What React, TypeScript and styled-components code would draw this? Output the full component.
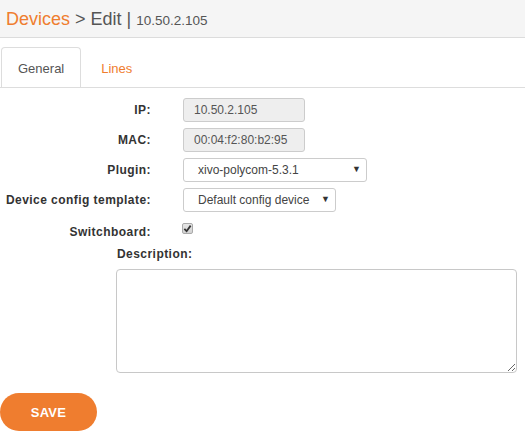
import React, { useState } from 'react';
import styled, { createGlobalStyle } from 'styled-components';

const GlobalStyle = createGlobalStyle`
  html, body {
    margin: 0;
    padding: 0;
    background: #fff;
    font-family: "Liberation Sans", Arial, sans-serif;
  }
`;

const ORANGE = '#ef7d2f';

const Page = styled.div`
  width: 525px;
  height: 433px;
  overflow: hidden;
`;

const Header = styled.div`
  height: 38px;
  background: #f5f5f5;
  border-bottom: 1px solid #dcdcdc;
  display: flex;
  align-items: center;
  padding-left: 6px;
  color: #555;
  font-size: 18px;
  padding-top: 2px;
  box-sizing: border-box;
  white-space: pre;
`;

const Crumb = styled.span`
  color: ${ORANGE};
`;

const SubTitle = styled.span`
  font-size: 13.5px;
  color: #555;
  padding-top: 2px;
`;

const TabBar = styled.div`
  display: flex;
  margin-top: 9px;
  padding-left: 1px;
  border-bottom: 1px solid #ddd;
  height: 40px;
`;

const Tab = styled.div<{ $active?: boolean }>`
  padding: 1px 16px 0;
  display: flex;
  align-items: center;
  font-size: 13px;
  color: ${p => (p.$active ? '#555' : ORANGE)};
  border: 1px solid ${p => (p.$active ? '#ddd' : 'transparent')};
  border-bottom: none;
  border-radius: 4px 4px 0 0;
  background: #fff;
  margin-bottom: -1px;
  height: 40px;
  box-sizing: border-box;
  & + & {
    margin-left: 3px;
  }
`;

const Form = styled.div`
  display: grid;
  grid-template-columns: 151px auto;
  column-gap: 32px;
  row-gap: 6px;
  margin-top: 10px;
  align-items: center;
`;

const Label = styled.label`
  text-align: right;
  font-weight: bold;
  font-size: 12px;
  line-height: 14px;
  color: #333;
  white-space: nowrap;
  letter-spacing: 0.45px;
`;

const TextInput = styled.input`
  width: 122px;
  height: 24px;
  box-sizing: border-box;
  border: 1px solid #ccc;
  border-radius: 3px;
  background: #eee;
  color: #555;
  font-family: inherit;
  font-size: 12px;
  padding: 0 10px;
  justify-self: start;
`;

const SelectBox = styled.div<{ $w: number }>`
  width: ${p => p.$w}px;
  height: 24px;
  box-sizing: border-box;
  border: 1px solid #ccc;
  border-radius: 3px;
  background: #fff;
  color: #444;
  font-size: 12px;
  display: flex;
  align-items: center;
  justify-content: space-between;
  padding: 0 5px 0 14px;
  justify-self: start;
`;

const Arrow = styled.span`
  font-size: 9px;
  color: #333;
  margin-top: -3px;
`;

const CheckLabel = styled(Label)`
  align-self: start;
  margin-top: 7px;
`;

const Check = styled.div`
  align-self: start;
  width: 11px;
  height: 11px;
  box-sizing: border-box;
  border: 1px solid #aaa;
  border-radius: 2px;
  background: linear-gradient(#e6e6e6, #d2d2d2);
  display: flex;
  align-items: center;
  justify-content: center;
  margin-top: 5px;
  margin-left: -1px;
`;

const DescBlock = styled.div`
  margin-left: 116px;
  margin-top: 8px;
`;

const DescLabel = styled.div`
  font-weight: bold;
  font-size: 12px;
  line-height: 14px;
  color: #333;
  letter-spacing: 0.45px;
  margin-left: 1px;
  margin-bottom: 8px;
`;

const TextArea = styled.textarea`
  display: block;
  width: 401px;
  height: 104px;
  box-sizing: border-box;
  border: 1px solid #c8c8c8;
  border-radius: 4px;
  resize: both;
  font-family: inherit;
  margin: 0;
`;

const SaveButton = styled.button`
  margin-top: 20px;
  width: 97px;
  height: 38px;
  border: none;
  border-radius: 19px;
  background: ${ORANGE};
  color: #fff;
  font-family: inherit;
  font-weight: bold;
  font-size: 13px;
  letter-spacing: 0.3px;
  display: block;
`;

export default function App() {
  const [desc, setDesc] = useState('');
  return (
    <Page>
      <GlobalStyle />
      <Header>
        <Crumb>Devices</Crumb>
        <span> &gt; Edit | </span>
        <SubTitle>10.50.2.105</SubTitle>
      </Header>
      <TabBar>
        <Tab $active>General</Tab>
        <Tab>Lines</Tab>
      </TabBar>
      <Form>
        <Label>IP:</Label>
        <TextInput readOnly value="10.50.2.105" />
        <Label>MAC:</Label>
        <TextInput readOnly value="00:04:f2:80:b2:95" />
        <Label>Plugin:</Label>
        <SelectBox $w={184}>
          <span>xivo-polycom-5.3.1</span>
          <Arrow>▼</Arrow>
        </SelectBox>
        <Label>Device config template:</Label>
        <SelectBox $w={153}>
          <span>Default config device</span>
          <Arrow>▼</Arrow>
        </SelectBox>
        <CheckLabel>Switchboard:</CheckLabel>
        <Check>
          <svg width="9" height="9" viewBox="0 0 10 10">
            <path d="M1.5 5.5 L4 8 L8.5 1.8" fill="none" stroke="#333" strokeWidth="2" />
          </svg>
        </Check>
      </Form>
      <DescBlock>
        <DescLabel>Description:</DescLabel>
        <TextArea value={desc} onChange={e => setDesc(e.target.value)} />
      </DescBlock>
      <SaveButton>SAVE</SaveButton>
    </Page>
  );
}
